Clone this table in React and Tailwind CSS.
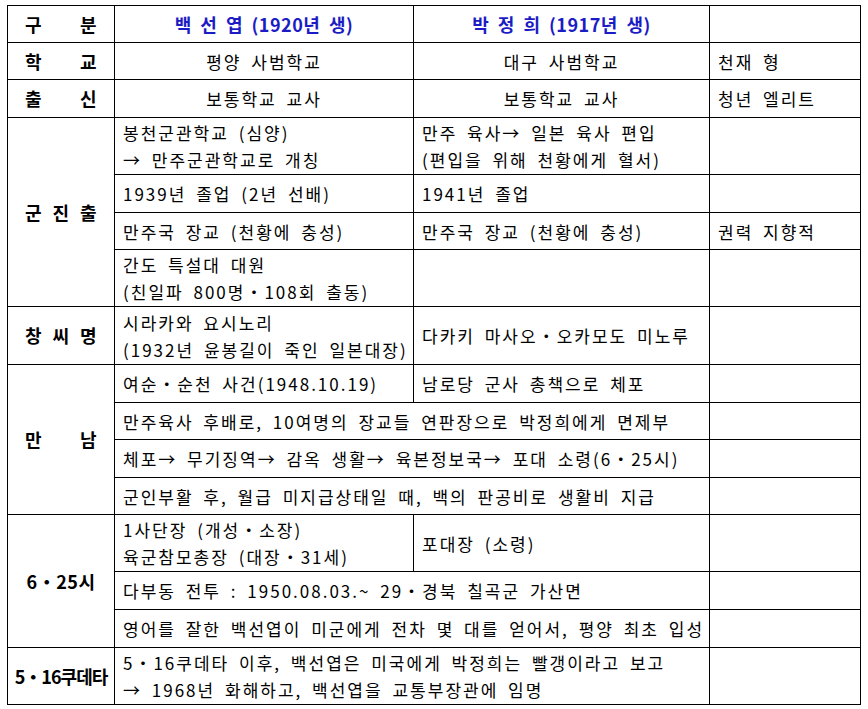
import React from 'react';

// 표 셀 공통 스타일
const cell = 'border border-black px-[8px] py-0 align-middle whitespace-nowrap';
const label = 'border border-black px-[17px] py-0 align-middle font-bold text-[18px] tracking-[0.5px] [word-spacing:0px]';
const head = 'border border-black px-[8px] py-0 align-middle text-center font-bold text-[18px] tracking-[0.5px] [word-spacing:4px] text-[#1c1cc4]';

function Spread({ chars }) {
  return (
    <div className="flex justify-between">
      {chars.map((c, i) => (
        <span key={i}>{c}</span>
      ))}
    </div>
  );
}

export default function App() {
  return (
    <div
      className="bg-white min-h-[709px] pt-[5px] pl-[7px] text-black text-[17px] leading-[27px] tracking-[2px] [word-spacing:4px]"
      style={{ fontFamily: '"Noto Sans CJK KR", "Noto Sans", sans-serif' }}
    >
      <table className="border-collapse table-fixed w-[853px]">
        <colgroup>
          <col className="w-[107px]" />
          <col className="w-[299px]" />
          <col className="w-[296px]" />
          <col className="w-[151px]" />
        </colgroup>
        <tbody>
          {/* 머리글 */}
          <tr className="h-[37px]">
            <td className={label}><Spread chars={['구', '분']} /></td>
            <td className={head}>백 선 엽 (1920년 생)</td>
            <td className={head}>박 정 희 (1917년 생)</td>
            <td className={cell}></td>
          </tr>
          <tr className="h-[37px]">
            <td className={label}><Spread chars={['학', '교']} /></td>
            <td className={`${cell} text-center`}>평양 사범학교</td>
            <td className={`${cell} text-center`}>대구 사범학교</td>
            <td className={cell}>천재 형</td>
          </tr>
          <tr className="h-[38px]">
            <td className={label}><Spread chars={['출', '신']} /></td>
            <td className={`${cell} text-center`}>보통학교 교사</td>
            <td className={`${cell} text-center`}>보통학교 교사</td>
            <td className={cell}>청년 엘리트</td>
          </tr>

          {/* 군진출 */}
          <tr className="h-[57px]">
            <td className={label} rowSpan={4}><Spread chars={['군', '진', '출']} /></td>
            <td className={cell}>봉천군관학교 (심양)<br />→ 만주군관학교로 개칭</td>
            <td className={cell}>만주 육사→ 일본 육사 편입<br />(편입을 위해 천황에게 혈서)</td>
            <td className={cell}></td>
          </tr>
          <tr className="h-[38px]">
            <td className={cell}>1939년 졸업 (2년 선배)</td>
            <td className={cell}>1941년 졸업</td>
            <td className={cell}></td>
          </tr>
          <tr className="h-[37px]">
            <td className={cell}>만주국 장교 (천황에 충성)</td>
            <td className={cell}>만주국 장교 (천황에 충성)</td>
            <td className={cell}>권력 지향적</td>
          </tr>
          <tr className="h-[57px]">
            <td className={cell}>간도 특설대 대원<br />(친일파 800명・108회 출동)</td>
            <td className={cell}></td>
            <td className={cell}></td>
          </tr>

          {/* 창씨명 */}
          <tr className="h-[58px]">
            <td className={label}><Spread chars={['창', '씨', '명']} /></td>
            <td className={cell}>시라카와 요시노리<br />(1932년 윤봉길이 죽인 일본대장)</td>
            <td className={cell}>다카키 마사오・오카모도 미노루</td>
            <td className={cell}></td>
          </tr>

          {/* 만남 */}
          <tr className="h-[38px]">
            <td className={label} rowSpan={4}><Spread chars={['만', '남']} /></td>
            <td className={cell}>여순・순천 사건(1948.10.19)</td>
            <td className={cell}>남로당 군사 총책으로 체포</td>
            <td className={cell}></td>
          </tr>
          <tr className="h-[37px]">
            <td className={cell} colSpan={2}>만주육사 후배로, 10여명의 장교들 연판장으로 박정희에게 면제부</td>
            <td className={cell}></td>
          </tr>
          <tr className="h-[38px]">
            <td className={cell} colSpan={2}>체포→ 무기징역→ 감옥 생활→ 육본정보국→ 포대 소령(6・25시)</td>
            <td className={cell}></td>
          </tr>
          <tr className="h-[37px]">
            <td className={cell} colSpan={2}>군인부활 후, 월급 미지급상태일 때, 백의 판공비로 생활비 지급</td>
            <td className={cell}></td>
          </tr>

          {/* 6・25시 */}
          <tr className="h-[57px]">
            <td className={`${label} text-center`} rowSpan={3}>6・25시</td>
            <td className={cell}>1사단장 (개성・소장)<br />육군참모총장 (대장・31세)</td>
            <td className={cell}>포대장 (소령)</td>
            <td className={cell}></td>
          </tr>
          <tr className="h-[38px]">
            <td className={cell} colSpan={2}>다부동 전투 : 1950.08.03.~ 29・경북 칠곡군 가산면</td>
            <td className={cell}></td>
          </tr>
          <tr className="h-[38px]">
            <td className={cell} colSpan={2}>영어를 잘한 백선엽이 미군에게 전차 몇 대를 얻어서, 평양 최초 입성</td>
            <td className={cell}></td>
          </tr>

          {/* 5・16쿠데타 */}
          <tr className="h-[57px]">
            <td className="border border-black px-0 py-0 align-middle font-bold text-center text-[18px] tracking-[-1px] [word-spacing:0px]">5・16쿠데타</td>
            <td className={cell} colSpan={2}>5・16쿠데타 이후, 백선엽은 미국에게 박정희는 빨갱이라고 보고<br />→ 1968년 화해하고, 백선엽을 교통부장관에 임명</td>
            <td className={cell}></td>
          </tr>
        </tbody>
      </table>
    </div>
  );
}
